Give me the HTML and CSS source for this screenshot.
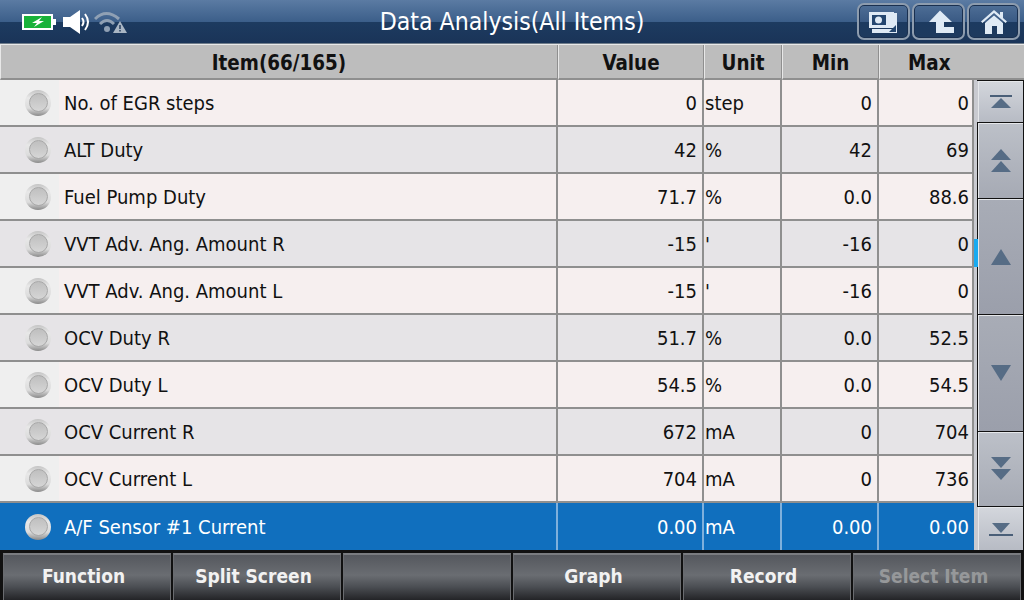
FILE: index.html
```html
<!DOCTYPE html>
<html lang="en">
<head>
  <meta charset="UTF-8" />
  <title>Data Analysis</title>
  <link rel="stylesheet" href="styles.css">
</head>
<body>
  <header class="topbar">
    <div class="status-icons">
      <svg class="icon-battery" width="36" height="20" viewBox="0 0 36 20">
        <rect x="1" y="3" width="29" height="14" fill="#18b23a" stroke="#fff" stroke-width="2"/>
        <rect x="31" y="7" width="3" height="6" fill="#fff"/>
        <path d="M20 5 L10 11 L15 11 L12 15 L22 9 L17 9 Z" fill="#fff"/>
      </svg>
      <svg class="icon-sound" width="28" height="24" viewBox="0 0 28 24">
        <path d="M0 7 H7 L17 0 V24 L7 17 H0 Z" fill="#fff"/>
        <path d="M19 8 Q22 12 19 16" fill="none" stroke="#fff" stroke-width="2"/>
        <path d="M22 4 Q28 12 22 20" fill="none" stroke="#fff" stroke-width="2"/>
      </svg>
      <svg class="icon-wifi" width="34" height="24" viewBox="0 0 34 24">
        <path d="M1 9 Q12 -2 25 9" fill="none" stroke="#8fa0b4" stroke-width="3"/>
        <path d="M6 14 Q13 7 20 14" fill="none" stroke="#8fa0b4" stroke-width="3"/>
        <circle cx="13" cy="19" r="3" fill="#8fa0b4"/>
        <path d="M26 11 L33 23 H19 Z" fill="#a9b6c4"/>
        <rect x="25.300" y="15" width="1.400" height="4" fill="#1d3557"/>
        <rect x="25.300" y="20" width="1.400" height="1.500" fill="#1d3557"/>
      </svg>
    </div>
    <h1 class="title">Data Analysis(All Items)</h1>
    <div class="top-buttons">
      <button class="top-btn">
        <svg width="34" height="24" viewBox="0 0 34 24">
          <path d="M5 19 V23 H30 V3 H27 V19 Z" fill="#dfeaf5"/>
          <path d="M2 2 H27 V18 H2 Z" fill="#dfeaf5"/>
          <rect x="5" y="5" width="14" height="10" fill="#24466f"/>
          <circle cx="11.500" cy="10" r="3.500" fill="#dfeaf5"/>
          <path d="M22 22 L29 15 V22 Z" fill="#24466f"/>
        </svg>
      </button>
      <button class="top-btn">
        <svg width="30" height="24" viewBox="0 0 30 24">
          <path d="M16 0.500 L28 12 H20 V17 H30 V23 H12 V12 H5 Z" fill="#dfeaf5"/>
        </svg>
      </button>
      <button class="top-btn">
        <svg width="26" height="26" viewBox="0 0 26 26">
          <path d="M13 1 L19 6 V3 H22 V9 L26 12.500 L24.500 14 L13 4 L1.500 14 L0 12.500 Z" fill="#dfeaf5"/>
          <path d="M4 14 L13 6.500 L22 14 V25 H16 V17 H11 V25 H4 Z" fill="#dfeaf5"/>
        </svg>
      </button>
    </div>
  </header>

  <div class="row head">
    <div>Item(66/165)</div>
    <div>Value</div>
    <div>Unit</div>
    <div>Min</div>
    <div class="head-max">Max</div>
  </div>

  <main class="content">
    <div class="table">
      <div class="row odd"><div class="name"><span class="dot-cell"><span class="dot"></span></span>No. of EGR steps</div><div class="num">0</div><div class="unit">step</div><div class="num">0</div><div class="num">0</div></div>
      <div class="row even"><div class="name"><span class="dot-cell"><span class="dot"></span></span>ALT Duty</div><div class="num">42</div><div class="unit">%</div><div class="num">42</div><div class="num">69</div></div>
      <div class="row odd"><div class="name"><span class="dot-cell"><span class="dot"></span></span>Fuel Pump Duty</div><div class="num">71.7</div><div class="unit">%</div><div class="num">0.0</div><div class="num">88.6</div></div>
      <div class="row even"><div class="name"><span class="dot-cell"><span class="dot"></span></span>VVT Adv. Ang. Amount R</div><div class="num">-15</div><div class="unit">'</div><div class="num">-16</div><div class="num">0</div></div>
      <div class="row odd"><div class="name"><span class="dot-cell"><span class="dot"></span></span>VVT Adv. Ang. Amount L</div><div class="num">-15</div><div class="unit">'</div><div class="num">-16</div><div class="num">0</div></div>
      <div class="row even"><div class="name"><span class="dot-cell"><span class="dot"></span></span>OCV Duty R</div><div class="num">51.7</div><div class="unit">%</div><div class="num">0.0</div><div class="num">52.5</div></div>
      <div class="row odd"><div class="name"><span class="dot-cell"><span class="dot"></span></span>OCV Duty L</div><div class="num">54.5</div><div class="unit">%</div><div class="num">0.0</div><div class="num">54.5</div></div>
      <div class="row even"><div class="name"><span class="dot-cell"><span class="dot"></span></span>OCV Current R</div><div class="num">672</div><div class="unit">mA</div><div class="num">0</div><div class="num">704</div></div>
      <div class="row odd"><div class="name"><span class="dot-cell"><span class="dot"></span></span>OCV Current L</div><div class="num">704</div><div class="unit">mA</div><div class="num">0</div><div class="num">736</div></div>
      <div class="row selected"><div class="name"><span class="dot-cell"><span class="dot"></span></span>A/F Sensor #1 Current</div><div class="num">0.00</div><div class="unit">mA</div><div class="num">0.00</div><div class="num">0.00</div></div>
    </div>

    <div class="gutter">
      <div class="thumb"></div>
    </div>

    <div class="scroller">
      <button class="scroll-btn sb-first">
        <svg width="22" height="16" viewBox="0 0 22 16"><rect y="1" width="22" height="2" fill="#4a5f78"/><path d="M11 4 L21 14 H1 Z" fill="#566c85"/></svg>
      </button>
      <button class="scroll-btn sb-page">
        <svg width="20" height="24" viewBox="0 0 20 24"><path d="M10 0 L20 11 H0 Z" fill="#566c85"/><path d="M10 12 L20 23 H0 Z" fill="#566c85"/></svg>
      </button>
      <button class="scroll-btn sb-line">
        <svg width="20" height="18" viewBox="0 0 20 18"><path d="M10 1 L20 17 H0 Z" fill="#566c85"/></svg>
      </button>
      <button class="scroll-btn sb-line">
        <svg width="20" height="18" viewBox="0 0 20 18"><path d="M10 17 L20 1 H0 Z" fill="#566c85"/></svg>
      </button>
      <button class="scroll-btn sb-page">
        <svg width="20" height="24" viewBox="0 0 20 24"><path d="M10 11 L20 0 H0 Z" fill="#566c85"/><path d="M10 23 L20 12 H0 Z" fill="#566c85"/></svg>
      </button>
      <button class="scroll-btn sb-last">
        <svg width="24" height="16" viewBox="0 0 24 16"><path d="M12 12 L21 2 H3 Z" fill="#566c85"/><rect y="13" width="24" height="2" fill="#4a5f78"/></svg>
      </button>
    </div>
  </main>

  <footer class="bottombar">
    <button class="fn-btn">Function</button>
    <button class="fn-btn">Split Screen</button>
    <button class="fn-btn"></button>
    <button class="fn-btn">Graph</button>
    <button class="fn-btn">Record</button>
    <button class="fn-btn disabled">Select Item</button>
  </footer>
</body>
</html>
```

FILE: styles.css
```css
* {
  box-sizing: border-box;
}

html, body {
  margin: 0;
  padding: 0;
}

body {
  width: 1024px;
  height: 600px;
  overflow: hidden;
  font-family: 'DejaVu Sans', sans-serif;
  font-stretch: condensed;
  background: #000;
}

button {
  font-family: inherit;
  font-stretch: inherit;
  padding: 0;
}

.topbar {
  height: 44px;
  display: flex;
  align-items: center;
  position: relative;
  background: linear-gradient(to bottom, #5b7ba3 0, #3c5f8a 50%, #1d3b60 52%, #1a3458 100%);
  border-bottom: 1px solid #6f7c8a;
}

.status-icons {
  display: flex;
  align-items: center;
  gap: 5px;
  padding-left: 22px;
}

.icon-sound {
  margin-right: -2px;
}

.title {
  margin: 0;
  text-align: center;
  font-size: 24.6px;
  font-weight: normal;
  color: #fff;
  position: absolute;
  left: 0;
  right: 0;
}

.top-buttons {
  margin-left: auto;
  display: flex;
  gap: 2px;
  padding-right: 4px;
  position: relative;
}

.top-btn {
  width: 53px;
  height: 37px;
  display: flex;
  align-items: center;
  justify-content: center;
  border: 2px solid #8d9cae;
  border-radius: 7px;
  background: linear-gradient(to bottom, #4e6e96 0, #3a5a84 50%, #1c3a60 52%, #1e3a5e 100%);
  box-shadow: inset 0 0 0 1px #1a3050;
}

.content {
  height: 470px;
  display: flex;
  background: #c9cad0;
}

.table {
  width: 974px;
  flex: none;
}

.row {
  display: grid;
  grid-template-columns: 558px 146px 78px 97px 95px;
  height: 47px;
  font-size: 20px;
  color: #111;
}

.row > div {
  display: flex;
  align-items: center;
  padding-top: 1px;
  border-right: 2px solid #8f8f8f;
  border-bottom: 2px solid #8f8f8f;
}

.head {
  grid-template-columns: 558px 146px 78px 97px 145px;
  height: 36px;
  background: #bdbdbd;
  border-top: 1px solid #e8e8e8;
  font-weight: bold;
  font-size: 20.4px;
}

.head > div {
  justify-content: center;
  padding-top: 2px;
  border-left: 1px solid #e8e8e8;
  border-right: 1px solid #8f8f8f;
}

.head .head-max {
  justify-content: flex-start;
  padding-left: 28px;
  border-right: 0;
}

.odd {
  background: #f6efef;
}

.even {
  background: #e6e4e7;
}

.row > .name {
  padding-top: 0;
}

.dot-cell {
  width: 59px;
  height: 100%;
  margin-right: 5px;
  display: flex;
  align-items: center;
  padding-left: 25px;
  background: #efefef;
}

.even .dot-cell {
  background: #e6e4e7;
}

.selected .dot-cell {
  background: transparent;
}

.dot {
  width: 26px;
  height: 26px;
  flex: none;
  display: flex;
  align-items: center;
  justify-content: center;
  border-radius: 50%;
  background: linear-gradient(to bottom, #c4c4c4, #e8e8e8 30%, #dcdcdc 70%, #8a8a8a);
}

.dot::after {
  content: "";
  width: 17px;
  height: 17px;
  border-radius: 50%;
  border: 1px solid #a8a8a8;
  background: linear-gradient(to bottom, #bfbfbf, #d6d6d6);
}

.row > .num {
  justify-content: flex-end;
  padding-right: 5px;
}

.row > .num:last-child {
  padding-right: 3px;
}

.unit {
  padding-left: 1px;
}

.selected {
  background: #106fbe;
  color: #fff;
}

.selected > div {
  border-bottom: 0;
  border-right-color: #7fb0dc;
}

.selected > div:last-child {
  border-right: 0;
}

.row.selected > .num:last-child {
  padding-right: 5px;
}

.gutter {
  width: 3px;
  position: relative;
  background: #c9cad0;
}

.thumb {
  position: absolute;
  top: 159px;
  left: 0;
  width: 4px;
  height: 28px;
  background: #19aaf0;
}

.scroller {
  width: 47px;
  display: flex;
  flex-direction: column;
  background: #111;
  padding: 1px 1px 0 1px;
}

.scroll-btn {
  width: 45px;
  display: flex;
  align-items: center;
  justify-content: center;
  border: 0;
  border-top: 1px solid #e5e7ea;
  border-left: 1px solid #e5e7ea;
  margin-bottom: 1px;
  background: linear-gradient(to bottom, #bcc0c8, #a6aab4);
}

.sb-first,
.sb-last {
  background: linear-gradient(to bottom, #d3d6dc, #b7bbc4);
  box-shadow: -1px 0 0 #c9cad0;
}

.sb-first {
  height: 41px;
}

.sb-last {
  height: 43px;
  margin-bottom: 0;
}

.sb-page {
  height: 75px;
}

.sb-line {
  height: 116px;
  background: linear-gradient(to bottom, #a8acb6, #9b9fab);
}

.bottombar {
  height: 50px;
  display: grid;
  grid-template-columns: repeat(6, 170px);
  padding: 3px 0 0 3px;
  background: #111;
}

.fn-btn {
  height: 47px;
  margin-right: 2px;
  padding: 0 7px 4px 0;
  border: 0;
  border-top: 2px solid #7a7c80;
  border-left: 1px solid #6a6c70;
  border-right: 1px solid #6a6c70;
  background: linear-gradient(to bottom, #55585e, #6a6d72 45%, #4c4f54 70%, #232427 100%);
  color: #f2f2f2;
  font-size: 19px;
  font-weight: bold;
}

.fn-btn.disabled {
  color: #96989a;
}
```
